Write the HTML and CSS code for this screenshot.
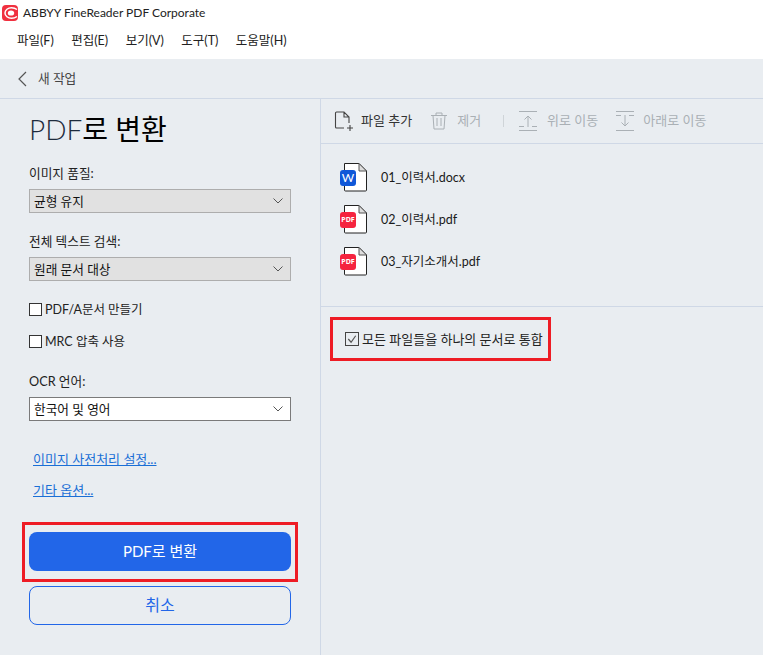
FILE: index.html
```html
<!DOCTYPE html>
<html lang="ko">
<head>
<meta charset="utf-8">
<title>ABBYY FineReader PDF Corporate</title>
<link rel="stylesheet" href="styles.css">
</head>
<body>
<div class="app">
  <header class="titlebar">
    <svg class="logo" width="20" height="20" viewBox="0 0 20 20"><rect x="2" y="3" width="16" height="16" rx="4" fill="#f0303f"/><path d="M17 7.500C15.500 6.300 13.500 5.700 11.500 5.700 8 5.700 5 8 5 11s3 5.300 6.500 5.300c2 0 4-.6 5.500-1.800" fill="none" stroke="#fff" stroke-width="1.500"/><ellipse cx="11" cy="11" rx="3.200" ry="2.600" fill="#fff"/></svg>
    <span>ABBYY FineReader PDF Corporate</span>
  </header>
  <nav class="menubar">
    <span>파일(F)</span><span>편집(E)</span><span>보기(V)</span><span>도구(T)</span><span>도움말(H)</span>
  </nav>
  <div class="crumb">
    <svg width="10" height="16" viewBox="0 0 10 16"><path d="M9 1 2 8l7 7" fill="none" stroke="#555" stroke-width="1.200"/></svg>
    <span>새 작업</span>
  </div>
  <main class="body">
    <section class="left">
      <h1 class="heading"><span class="thin">PDF</span>로 변환</h1>
      <label class="field-label first">이미지 품질:</label>
      <div class="select gray"><span>균형 유지</span><svg class="chev" width="10" height="6" viewBox="0 0 10 6"><path d="M.5.5 5 5 9.500.5" fill="none" stroke="#555"/></svg></div>
      <label class="field-label second">전체 텍스트 검색:</label>
      <div class="select gray"><span>원래 문서 대상</span><svg class="chev" width="10" height="6" viewBox="0 0 10 6"><path d="M.5.5 5 5 9.500.5" fill="none" stroke="#555"/></svg></div>
      <div class="check first"><i class="box"></i><span>PDF/A문서 만들기</span></div>
      <div class="check"><i class="box"></i><span>MRC 압축 사용</span></div>
      <label class="field-label third">OCR 언어:</label>
      <div class="select white"><span>한국어 및 영어</span><svg class="chev" width="10" height="6" viewBox="0 0 10 6"><path d="M.5.5 5 5 9.500.5" fill="none" stroke="#555"/></svg></div>
      <a class="link link-a">이미지 사전처리 설정...</a>
      <a class="link link-b">기타 옵션...</a>
      <div class="hl-btn"><button class="btn primary">PDF로 변환</button></div>
      <button class="btn outline">취소</button>
    </section>
    <section class="right">
      <div class="toolbar">
        <div class="tool on">
          <svg width="20" height="20" viewBox="0 0 20 20" fill="none" stroke="#444" stroke-width="1.100"><path d="M10 17H2.500a1 1 0 0 1-1-1V2a1 1 0 0 1 1-1H10l5 5v6M10 1v5h5M13 17h6M16 14v6"/></svg>
          <span>파일 추가</span>
        </div>
        <div class="tool off t-del">
          <svg width="16" height="18" viewBox="0 0 16 18" fill="none" stroke="#aab0b5"><path d="M0 3.500h16M5 3.500V1h6v2.500M2 3.500 3 17h10l1-13.500M6 6v8M10 6v8"/></svg>
          <span>제거</span>
        </div>
        <i class="sep"></i>
        <div class="tool off t-up">
          <svg width="18" height="20" viewBox="0 0 18 20" fill="none" stroke="#aab0b5"><path d="M0 .5h18M0 19.500h18M0 15.500h5M13 15.500h5M9 16V5M5.500 8.500 9 5l3.500 3.500"/></svg>
          <span>위로 이동</span>
        </div>
        <div class="tool off t-down">
          <svg width="18" height="20" viewBox="0 0 18 20" fill="none" stroke="#aab0b5"><path d="M0 .5h18M0 19.500h18M0 4.500h5M13 4.500h5M9 4v11M5.500 11.500 9 15l3.500-3.500"/></svg>
          <span>아래로 이동</span>
        </div>
      </div>
      <ul class="files">
        <li>
          <span class="ficon"><svg width="30" height="30" viewBox="0 0 30 30"><path d="M5.500 1.500H20L27.500 9v19a1 1 0 0 1-1 1H6.500a1 1 0 0 1-1-1z" fill="#fff" stroke="#222"/><path d="M20 1.500V9h7.500z" fill="#ddd" stroke="#555"/><rect x="1" y="8" width="16" height="16" rx="3" fill="#0f57d8"/></svg><b class="fw">W</b></span>
          <span class="fname">01_이력서.docx</span>
        </li>
        <li>
          <span class="ficon"><svg width="30" height="30" viewBox="0 0 30 30"><path d="M5.500 1.500H20L27.500 9v19a1 1 0 0 1-1 1H6.500a1 1 0 0 1-1-1z" fill="#fff" stroke="#222"/><path d="M20 1.500V9h7.500z" fill="#ddd" stroke="#555"/><rect x="1" y="8" width="16" height="16" rx="3" fill="#f5243f"/></svg><b class="fp">PDF</b></span>
          <span class="fname">02_이력서.pdf</span>
        </li>
        <li>
          <span class="ficon"><svg width="30" height="30" viewBox="0 0 30 30"><path d="M5.500 1.500H20L27.500 9v19a1 1 0 0 1-1 1H6.500a1 1 0 0 1-1-1z" fill="#fff" stroke="#222"/><path d="M20 1.500V9h7.500z" fill="#ddd" stroke="#555"/><rect x="1" y="8" width="16" height="16" rx="3" fill="#f5243f"/></svg><b class="fp">PDF</b></span>
          <span class="fname">03_자기소개서.pdf</span>
        </li>
      </ul>
      <div class="merge-area">
        <div class="hl-merge">
          <i class="box checked"><svg width="12" height="12" viewBox="0 0 13 13"><path d="M2.500 6.500 5.500 10l5-7" fill="none" stroke="#555" stroke-width="1.300"/></svg></i>
          <span>모든 파일들을 하나의 문서로 통합</span>
        </div>
      </div>
    </section>
  </main>
</div>
</body>
</html>
```
FILE: styles.css
```css
* { box-sizing: border-box; }
html, body { margin: 0; height: 100%; }
body {
  font-family: Lato, "Noto Sans CJK KR", sans-serif;
  font-size: 12.7px;
  color: #1a1a1a;
  background: #e9edf1;
}
.app { width: 763px; height: 655px; display: flex; flex-direction: column; overflow: hidden; }
.titlebar { height: 24px; background: #fff; display: flex; align-items: center; gap: 3px; font-size: 12px; color: #222; }
.logo { flex: none; }
.menubar { height: 35px; background: #fff; display: flex; align-items: center; gap: 17.500px; padding: 0 0 5px 17px; font-size: 12.500px; color: #222; }
.crumb { height: 40px; display: flex; align-items: center; gap: 11px; padding-left: 17px; border-bottom: 1px solid #cfd8e6; color: #444; }
.crumb span { padding-bottom: 2px; }
.body { flex: 1; display: flex; min-height: 0; }
.left { width: 321px; flex: none; padding: 0 29px; border-right: 1px solid #cfd8e6; display: flex; flex-direction: column; }
.heading { margin: 11px 0 0; font-size: 28px; line-height: 38px; font-weight: 400; color: #000; }
.thin { font-weight: 300; color: #1d2b3c; }
.field-label { display: block; line-height: 18px; color: #222; }
.field-label.first { margin-top: 16px; }
.field-label.second { margin-top: 19px; }
.field-label.third { margin-top: 22px; }
.select { height: 24px; margin-top: 7px; border: 1px solid #adadad; padding: 0 4px; display: flex; align-items: center; justify-content: space-between; color: #111; }
.select span { padding-bottom: 2px; }
.select.gray { background: #e1e1e1; }
.select.white { background: #fff; border-color: #7a7a7a; }
.chev { margin-right: 3px; }
.check { display: flex; align-items: center; gap: 3px; margin-top: 14px; height: 18px; font-size: 12.500px; color: #222; }
.check span { padding-bottom: 2px; }
.check.first { margin-top: 19px; }
.box { width: 13px; height: 13px; flex: none; border: 1px solid #333; background: #fff; display: block; }
.box.checked { background: #e9edf1; border-color: #444; width: 14px; height: 14px; }
.box.checked svg { display: block; }
.link { display: block; color: #1a6fd6; text-decoration: underline; margin-left: 4px; line-height: 18px; font-size: 13px; }
.link-a { margin-top: 29px; }
.link-b { margin-top: 13px; }
.hl-btn { margin: 23px -7px 0; border: 3px solid #ee1c25; padding: 7px 4px 8px; }
.btn { display: block; width: 100%; height: 39px; border-radius: 8px; font: inherit; font-size: 15px; padding: 0 0 2px; }
.primary { background: #2266e8; color: #fff; border: 0; }
.outline { margin-top: 4px; background: transparent; color: #2266e8; border: 1px solid #2266e8; font-size: 16px; padding-bottom: 4px; }
.right { flex: 1; display: flex; flex-direction: column; }
.toolbar { height: 45px; display: flex; align-items: center; padding-left: 13px; border-bottom: 1px solid #cfd8e6; font-size: 13px; }
.tool { display: flex; align-items: center; }
.tool span { padding-bottom: 3px; }
.tool.on { color: #333; gap: 7px; }
.tool.off { color: #aab0b5; }
.t-del { margin-left: 19px; gap: 10px; }
.sep { width: 1px; height: 12px; background: #cfd4d8; margin: 0 15px 0 22px; }
.t-up { gap: 10px; }
.t-down { margin-left: 18px; gap: 9px; }
.files { list-style: none; margin: 0; padding: 12px 0 0 18px; height: 163px; border-bottom: 1px solid #cfd8e6; }
.files li { display: flex; align-items: center; gap: 12px; height: 42px; color: #1a1a1a; }
.fname { font-size: 12.500px; padding-bottom: 2px; }
.ficon { position: relative; width: 30px; height: 30px; display: block; }
.ficon svg { display: block; }
.ficon b { position: absolute; left: 1px; top: 8px; width: 16px; height: 16px; line-height: 16px; text-align: center; color: #fff; }
.fw { font-size: 12px; font-weight: 400; }
.fp { font-family: "Noto Sans", sans-serif; font-size: 7px; font-weight: 700; }
.merge-area { padding: 10px 0 0 9px; }
.hl-merge { width: 221px; height: 44px; border: 3px solid #ee1c25; display: flex; align-items: center; gap: 3px; padding-left: 12px; font-size: 13px; color: #222; }
.hl-merge span { padding-bottom: 2px; }
```
